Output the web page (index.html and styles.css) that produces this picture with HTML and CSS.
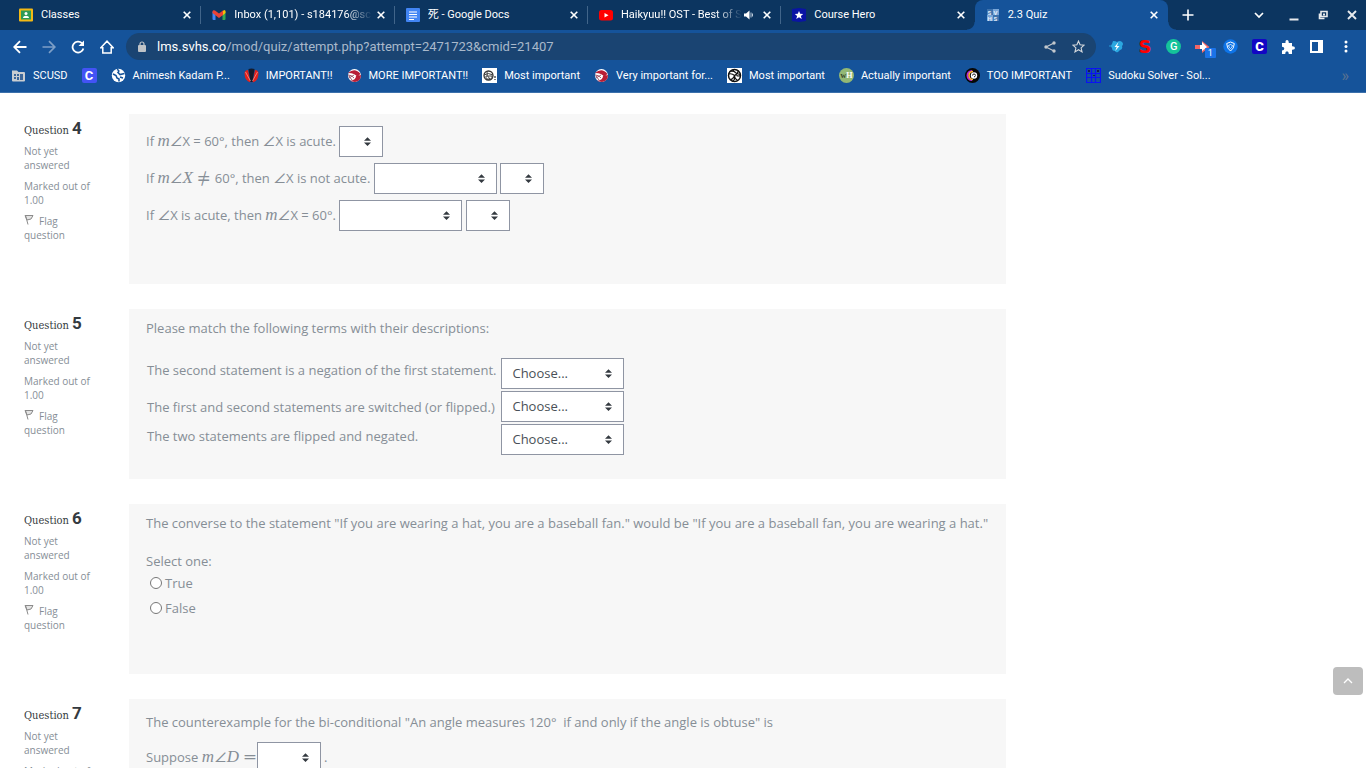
FILE: index.html
```html
<!DOCTYPE html>
<html lang="en">
<head>
    <meta charset="utf-8">
    <title>2.3 Quiz</title>
    <link rel="stylesheet" href="styles.css">
</head>
<body>
    <div class="browser">
        <!-- tabs -->
        <div class="tabStrip">
            <div class="tabs">
                <div class="tab">
                    <svg class="tabIcon" viewBox="0 0 14 14"><rect width="14" height="13" y="0.5" rx="1" fill="#f4b915"/><rect x="2" y="2.5" width="10" height="9" fill="#2d9a57"/><circle cx="7" cy="5.5" r="1.5" fill="#fff"/><path d="M4 10c0-3 6-3 6 0z" fill="#fff"/></svg>
                    <span class="tabTitle">Classes</span>
                    <button class="close" aria-label="Close tab"><svg viewBox="0 0 8 8"><path d="M0.700 0.700l6.600 6.600M7.300 0.700l-6.600 6.600"/></svg></button>
                </div>
                <div class="tab">
                    <svg class="tabIcon" viewBox="0 0 14 14"><path d="M0.500 3.500L3.500 5.500V12H1.500q-1 0-1-1z" fill="#4285f4"/><path d="M13.500 3.500L10.500 5.500V12H12.500q1 0 1-1z" fill="#34a853"/><path d="M10.500 3l2-1q1 0 1 1.500V5l-3 2.500z" fill="#fbbc04"/><path d="M0.500 5V3.500Q1 1.500 3 2.500l4 3 4-3V7L7 10 0.500 5z" fill="#ea4335"/></svg>
                    <span class="tabTitle fade">Inbox (1,101) - s184176@sc</span>
                    <button class="close" aria-label="Close tab"><svg viewBox="0 0 8 8"><path d="M0.700 0.700l6.600 6.600M7.300 0.700l-6.600 6.600"/></svg></button>
                </div>
                <div class="tab">
                    <svg class="tabIcon" viewBox="0 0 14 14"><rect width="14" height="14" rx="1" fill="#4285f4"/><path d="M3 4h8M3 6.500h8M3 9h8M3 11.500h5" stroke="#fff" stroke-width="1.200"/></svg>
                    <span class="tabTitle">死 - Google Docs</span>
                    <button class="close" aria-label="Close tab"><svg viewBox="0 0 8 8"><path d="M0.700 0.700l6.600 6.600M7.300 0.700l-6.600 6.600"/></svg></button>
                </div>
                <div class="tab">
                    <svg class="tabIcon" viewBox="0 0 14 14"><rect y="2" width="14" height="10.500" rx="2.500" fill="#f00"/><path d="M5.500 5v4.500L9.500 7.200z" fill="#fff"/></svg>
                    <span class="tabTitle fade">Haikyuu!! OST - Best of S</span>
                    <svg class="sound" viewBox="0 0 10 10"><path d="M0 3.500h2L5.500 0.500v9L2 6.500H0z" fill="#fff"/><path d="M7 2.500v5M8.500 3.500v3" stroke="#b9c9d9"/></svg>
                    <button class="close" aria-label="Close tab"><svg viewBox="0 0 8 8"><path d="M0.700 0.700l6.600 6.600M7.300 0.700l-6.600 6.600"/></svg></button>
                </div>
                <div class="tab">
                    <svg class="tabIcon" viewBox="0 0 14 14"><path d="M0 1l7-1 7 1v12l-7 1-7-1z" fill="#0a14a4"/><path d="M7 3l1.200 2.700 3 .2-2.300 2 .8 3L7 9.300l-2.700 1.600.8-3-2.300-2 3-.2z" fill="#fff"/></svg>
                    <span class="tabTitle">Course Hero</span>
                    <button class="close" aria-label="Close tab"><svg viewBox="0 0 8 8"><path d="M0.700 0.700l6.600 6.600M7.300 0.700l-6.600 6.600"/></svg></button>
                </div>
                <div class="tab active">
                    <svg class="tabIcon" viewBox="0 0 14 14"><path d="M1 1h6v6H1zM7 7h6v6H7z" fill="#3d72ad"/><path d="M7 1h6v6H7zM1 7h6v6H1z" fill="#79a6d8"/><text x="1.500" y="6.500" class="svhs">S</text><text x="7.500" y="6.500" class="svhs">V</text><text x="1.500" y="12.500" class="svhs">H</text><text x="7.500" y="12.500" class="svhs">S</text></svg>
                    <span class="tabTitle">2.3 Quiz</span>
                    <button class="close" aria-label="Close tab"><svg viewBox="0 0 8 8"><path d="M0.700 0.700l6.600 6.600M7.300 0.700l-6.600 6.600"/></svg></button>
                </div>
            </div>
            <div class="windowButtons">
                <button class="newTab" aria-label="New tab"><svg width="12" height="12" viewBox="0 0 12 12"><path d="M6 0.500v11M0.500 6h11" stroke="#fff" stroke-width="1.600"/></svg></button>
                <button class="search" aria-label="Search tabs"><svg width="10" height="8" viewBox="0 0 10 8"><path d="M1 2l4 4 4-4" fill="none" stroke="#fff" stroke-width="1.700"/></svg></button>
                <button class="win" aria-label="Minimize"><svg width="10" height="12" viewBox="0 0 10 12"><path d="M0.500 10.500h9" stroke="#e8eaed" stroke-width="2"/></svg></button>
                <button class="win" aria-label="Restore"><svg width="10" height="10" viewBox="0 0 10 10"><path d="M3 1.500h6v5H3zM1.500 3.500v5h5" fill="none" stroke="#e8eaed" stroke-width="1.600"/><path d="M5 3.500h2v2H5z" fill="#e8eaed"/></svg></button>
                <button class="win" aria-label="Close"><svg width="10" height="10" viewBox="0 0 10 10"><path d="M1 1l8 8M9 1l-8 8" stroke="#e8eaed" stroke-width="1.900"/></svg></button>
            </div>
        </div>

        <!-- address bar -->
        <div class="toolbar">
            <div class="nav">
                <button aria-label="Back"><svg width="14" height="14" viewBox="0 0 14 14"><path d="M13.500 7H1.500M7 1.200L1.200 7 7 12.800" fill="none" stroke="#fff" stroke-width="1.800"/></svg></button>
                <button aria-label="Forward"><svg width="14" height="14" viewBox="0 0 14 14"><path d="M0.500 7h12M7 1.200L12.800 7 7 12.800" fill="none" stroke="#7d9fc7" stroke-width="1.700"/></svg></button>
                <button aria-label="Reload"><svg width="14" height="14" viewBox="0 0 14 14"><path d="M12.400 8.500A5.500 5.500 0 1 1 11 3.200" fill="none" stroke="#fff" stroke-width="1.800"/><path d="M13 0.500v5.500H7.500z" fill="#fff"/></svg></button>
                <button aria-label="Home"><svg width="14" height="14" viewBox="0 0 14 14"><path d="M0.800 7.800L7 1.200l6.200 6.600H11.200v5.300H2.800V7.800z" fill="none" stroke="#fff" stroke-width="1.500"/></svg></button>
            </div>
            <div class="urlBar">
                <svg width="8" height="11" viewBox="0 0 8 11"><rect y="4" width="8" height="7" rx="1" fill="#bfc3c7"/><path d="M2 4.500V3a2 2 0 0 1 4 0v1.500" fill="none" stroke="#bfc3c7" stroke-width="1.200"/></svg>
                <span class="url"><span class="host">lms.svhs.co</span>/mod/quiz/attempt.php?attempt=2471723&amp;cmid=21407</span>
                <svg width="12" height="12" viewBox="0 0 12 12"><path d="M10 2L2 6l8 4" fill="none" stroke="#c3c8cd" stroke-width="1.200"/><circle cx="10" cy="2" r="1.700" fill="#c3c8cd"/><circle cx="2" cy="6" r="1.700" fill="#c3c8cd"/><circle cx="10" cy="10" r="1.700" fill="#c3c8cd"/></svg>
                <svg class="star" width="13" height="13" viewBox="0 0 14 14"><path d="M7 1.200l1.700 4 4.300.4-3.200 2.900 1 4.300L7 10.500l-3.800 2.300 1-4.300L1 5.600l4.300-.4z" fill="none" stroke="#d5d9dd" stroke-width="1.200"/></svg>
            </div>
            <div class="extensions">
                <span><svg width="15" height="15" viewBox="0 0 15 15"><path d="M4 2q3 0 4 1 3-2 5 0 2 2 0 4 1 3-2 4l-2 2q-2 1-3-1-3 0-3-3-2-2 0-4z" fill="#2ba7e0"/><circle cx="1" cy="7" r=".8" fill="#2ba7e0"/><path d="M9.500 3L5.500 8h2.200l-1.500 4 4.300-5H8z" fill="#fff"/></svg></span>
                <span class="letterS">S</span>
                <span class="letterG">G</span>
                <span class="arrow"><svg width="15" height="12" viewBox="0 0 15 12"><path d="M0 4h7V0l7.500 6L7 12V8H0z" fill="#f26666"/><path d="M5 4h2V1l5 5-5 4V8H5z" fill="#fff"/></svg><b class="badge">1</b></span>
                <span><svg width="15" height="15" viewBox="0 0 15 15"><circle cx="7.500" cy="7.500" r="7.200" fill="#0e74e8"/><path d="M7.500 3l3.800 1.500q0 5-3.800 7.500-3.800-2.500-3.800-7.500z" fill="none" stroke="#fff"/><path d="M7.500 5.500L9.500 6.500q-.3 2-2 3-1.700-1-2-3z" fill="#0e74e8" stroke="#fff" stroke-width=".8"/></svg></span>
                <span class="letterC dark">C</span>
                <span><svg width="14" height="14" viewBox="0 0 14 14"><path d="M1 3h3.500Q4.200 0 6 0t1.800 3H11v3.200q3-.2 3 1.800t-3 1.800V14H7.800q0-2.700-1.800-2.700T4.200 14H1v-3.500q2.300-.2 2.300-2T1 6.700z" fill="#fff"/></svg></span>
                <span><svg width="13" height="13" viewBox="0 0 13 13"><path d="M1 1h11v11H1z" fill="none" stroke="#fff" stroke-width="2"/><path d="M8 1h4v11H8z" fill="#fff"/></svg></span>
                <span><svg width="4" height="13" viewBox="0 0 4 13"><circle cx="2" cy="2" r="1.500" fill="#fff"/><circle cx="2" cy="6.500" r="1.500" fill="#fff"/><circle cx="2" cy="11" r="1.500" fill="#fff"/></svg></span>
            </div>
        </div>

        <!-- bookmarks -->
        <div class="bookmarks">
            <a href="#"><svg viewBox="0 0 15 15"><path d="M1 2.500h5l1.500 1.500H13q1 0 1 1v7.500q0 1-1 1H2q-1 0-1-1z" fill="#c9cdd1"/><path d="M3 6h2v2H3zM6 6h2v2H6zM3 9h2v2H3zM6 9h2v3H6zM9 6h3v6H9z" fill="#3d679a"/></svg>SCUSD</a>
            <a href="#"><span class="letterC">C</span></a>
            <a href="#"><svg viewBox="0 0 15 15"><circle cx="7.500" cy="7.500" r="6.700" fill="#fff"/><path d="M2 6l3 1.500 1 2.500 2 1v2.500M6 1.500q3 1 1 3l2 2 4.500-1M9 9l3 1" fill="none" stroke="#15539a" stroke-width="1.600"/></svg>Animesh Kadam P...</a>
            <a href="#"><svg viewBox="0 0 15 15"><path d="M0.500 5q0 8 6 9.500L4 2q-3 0-3.500 3zM14.500 5q0 8-6 9.500L11 2q3 0 3.500 3z" fill="#e3201c"/><path d="M4.500 1q3-1 6 0L8.500 14h-2z" fill="#151b2c"/><path d="M1.500 4l5 9M13.500 4l-5 9" stroke="#f7a8a0" stroke-width=".7"/></svg>IMPORTANT!!</a>
            <a href="#"><svg viewBox="0 0 15 15"><circle cx="7.500" cy="7.500" r="6.500" fill="#fff"/><path d="M1 5q7-6 12.500 1-2 1-3 3-3-4-9-4zM3 13q6-1 6-5l5-1q0 6-6 7z" fill="#b81e36"/><path d="M1 7q4 0 6 3M2 10l5-3M2 8l3 4" stroke="#a55b6e" fill="none"/></svg>MORE IMPORTANT!!</a>
            <a href="#"><svg viewBox="0 0 15 15"><path d="M0 0h15v15H0z" fill="#fff"/><circle cx="6.500" cy="7.500" r="4.500" fill="none" stroke="#333" stroke-width="1.300"/><path d="M2 7q4-3 9 0M5 3q-1 5 3 8M4 8h6v3H4z" fill="none" stroke="#444"/><path d="M13 8v2M13 11v1" stroke="#555" stroke-width="1.500"/></svg>Most important</a>
            <a href="#"><svg viewBox="0 0 15 15"><circle cx="7.500" cy="7.500" r="6.500" fill="#fff"/><path d="M1 5q7-6 12.500 1-2 1-3 3-3-4-9-4zM3 13q6-1 6-5l5-1q0 6-6 7z" fill="#b81e36"/><path d="M1 7q4 0 6 3M2 10l5-3M2 8l3 4" stroke="#a55b6e" fill="none"/></svg>Very important for...</a>
            <a href="#"><svg viewBox="0 0 15 15"><path d="M0 0h15v15H0z" fill="#fff"/><circle cx="7.500" cy="7.500" r="6" fill="none" stroke="#111" stroke-width="1.500"/><path d="M7.500 7.500Q5 5 1.500 6M7.500 7.500q3-1 4-5M7.500 7.500q0 3 3 5M6 1.500q0 3 7 5M2.500 3.500q4-1 6 1M3 11.500q3 0 4-3M5 13.500q4-2 2-5M9.500 7.500q2 1 4 0" fill="none" stroke="#111" stroke-width="1.100"/></svg>Most important</a>
            <a href="#"><span class="wikihow"><i>w</i>H</span>Actually important</a>
            <a href="#"><svg viewBox="0 0 15 15"><circle cx="7.500" cy="7.500" r="7.500" fill="#070707"/><path d="M7 3a4.500 4.500 0 0 0 0 9" fill="none" stroke="#b52bd4" stroke-width="2"/><path d="M8 3.500a4 4 0 0 0 0 8" fill="none" stroke="#ffb52e" stroke-width="1.600"/><circle cx="9" cy="7.500" r="3.200" fill="#fff"/><path d="M7.500 7.500a1.500 1.500 0 0 1 3 0M9 9l1.500-1" fill="none" stroke="#222"/></svg>TOO IMPORTANT</a>
            <a href="#"><svg viewBox="0 0 15 15"><path d="M0.500 0.500h14v14H0.500zM5.500 0v15M9.500 0v15M0 5.500h15M0 9.500h15" fill="none" stroke="#0b12f2" stroke-width="1.200"/><path d="M2 2h2v2H2zM11 2h2v2h-2zM7 7h2v1H7z" fill="#111a55"/></svg>Sudoku Solver - Sol...</a>
            <button class="more" aria-label="More bookmarks">»</button>
        </div>

        <!-- quiz -->
        <div class="page">
            <div class="question">
                <div class="info">
                    <h3>Question <span class="qno">4</span></h3>
                    <p>Not yet<br>answered</p>
                    <p>Marked out of<br>1.00</p>
                    <p><a href="#"><svg class="flag" viewBox="0 0 10 11"><path d="M1.500 1.500L4 10.500M1 1.500h8L7 5 3 6z" fill="#e4e4e4" stroke="#8b8b8b"/></svg>Flag<br>question</a></p>
                </div>
                <div class="content">
                    <div class="blank">If <span class="math"><i>m</i><b>∠</b></span>X = 60°, then <span class="math"><b>∠</b></span>X is acute. <select class="short" aria-label="Truth value"><option></option><option>T</option><option>F</option></select></div>
                    <div class="blank">If <span class="math"><i>m</i><b>∠</b><i>X</i> <b class="sign">≠</b> </span>60°, then <span class="math"><b>∠</b></span>X is not acute. <select aria-label="Statement type"><option></option><option>Converse</option><option>Inverse</option></select> <select class="short" aria-label="Truth value"><option></option><option>T</option><option>F</option></select></div>
                    <div class="blank">If <span class="math"><b>∠</b></span>X is acute, then <span class="math"><i>m</i><b>∠</b></span>X = 60°. <select aria-label="Statement type"><option></option><option>Converse</option><option>Inverse</option></select> <select class="short" aria-label="Truth value"><option></option><option>T</option><option>F</option></select></div>
                </div>
            </div>

            <div class="question">
                <div class="info">
                    <h3>Question <span class="qno">5</span></h3>
                    <p>Not yet<br>answered</p>
                    <p>Marked out of<br>1.00</p>
                    <p><a href="#"><svg class="flag" viewBox="0 0 10 11"><path d="M1.500 1.500L4 10.500M1 1.500h8L7 5 3 6z" fill="#e4e4e4" stroke="#8b8b8b"/></svg>Flag<br>question</a></p>
                </div>
                <div class="content">
                    <p>Please match the following terms with their descriptions:</p>
                    <table class="match">
                        <tr>
                            <td class="top"><label for="match1">The second statement is a negation of the first statement.</label></td>
                            <td><select id="match1"><option>Choose...</option></select></td>
                        </tr>
                        <tr>
                            <td><label for="match2">The first and second statements are switched (or flipped.)</label></td>
                            <td><select id="match2"><option>Choose...</option></select></td>
                        </tr>
                        <tr>
                            <td class="top"><label for="match3">The two statements are flipped and negated.</label></td>
                            <td><select id="match3"><option>Choose...</option></select></td>
                        </tr>
                    </table>
                </div>
            </div>

            <div class="question">
                <div class="info">
                    <h3>Question <span class="qno">6</span></h3>
                    <p>Not yet<br>answered</p>
                    <p>Marked out of<br>1.00</p>
                    <p><a href="#"><svg class="flag" viewBox="0 0 10 11"><path d="M1.500 1.500L4 10.500M1 1.500h8L7 5 3 6z" fill="#e4e4e4" stroke="#8b8b8b"/></svg>Flag<br>question</a></p>
                </div>
                <div class="content">
                    <p>The converse to the statement "If you are wearing a hat, you are a baseball fan." would be "If you are a baseball fan, you are wearing a hat."</p>
                    <div class="select">Select one:</div>
                    <div class="answer"><input type="radio" name="q6" id="true"><label for="true">True</label></div>
                    <div class="answer"><input type="radio" name="q6" id="false"><label for="false">False</label></div>
                </div>
            </div>

            <div class="question">
                <div class="info">
                    <h3>Question <span class="qno">7</span></h3>
                    <p>Not yet<br>answered</p>
                    <p>Marked out of<br>1.00</p>
                </div>
                <div class="content counter">
                    <p>The counterexample for the bi-conditional "An angle measures 120°&nbsp; if and only if the angle is obtuse" is</p>
                    <div class="blank">Suppose <span class="math"><i>m</i><b>∠</b><i>D</i> <b class="sign">=</b></span><select class="medium" aria-label="Angle measure"><option></option></select> .</div>
                </div>
            </div>
            <button class="toTop" aria-label="Back to top"><svg width="10" height="6" viewBox="0 0 10 6"><path d="M1 5l4-4 4 4" fill="none" stroke="#fff" stroke-width="1.300"/></svg></button>
        </div>
    </div>
</body>
</html>
```

FILE: styles.css
```css
* {
    box-sizing: border-box;
}

body {
    margin: 0;
    font-family: "Open Sans", sans-serif;
    font-size: 13px;
    line-height: 20px;
    color: #868e96;
    background-color: #fff;
}

button {
    padding: 0;
    border: 0;
    background: none;
    color: #fff;
    display: flex;
    align-items: center;
    justify-content: center;
}

a {
    color: inherit;
    text-decoration: none;
}

.browser {
    height: 100vh;
    display: flex;
    flex-direction: column;
    overflow: hidden;
}

/* tabs */
.tabStrip {
    display: flex;
    flex: none;
    height: 30px;
    background-color: #0c3560;
    color: #fff;
    font: 11px/28px Roboto, "Noto Sans CJK JP", sans-serif;
}

.tabs {
    display: flex;
    flex: 1;
    min-width: 0;
    padding-left: 8px;
}

.tab {
    position: relative;
    display: flex;
    align-items: center;
    flex: 1;
    min-width: 0;
    height: 30px;
    padding: 0 10px 0 11px;
}

.tab:not(.active)::after {
    content: "";
    position: absolute;
    right: 0;
    top: 6px;
    height: 18px;
    border-right: 1px solid #41658a;
}

.tab:nth-last-child(2)::after {
    display: none;
}

.tab.active {
    background-color: #15539a;
    border-radius: 8px 8px 0 0;
}

.tab.active::before, .tab.active::after {
    content: "";
    position: absolute;
    bottom: 0;
    width: 8px;
    height: 8px;
}

.tab.active::before {
    left: -8px;
    background: radial-gradient(circle at 0 0, transparent 7px, #15539a 8px);
}

.tab.active::after {
    right: -8px;
    background: radial-gradient(circle at 100% 0, transparent 7px, #15539a 8px);
}

.tabIcon {
    width: 14px;
    height: 14px;
    flex: none;
    margin-right: 8px;
}

.svhs {
    font: bold 6px Roboto, sans-serif;
    fill: #e4eefa;
}

.tabTitle {
    flex: 1;
    min-width: 0;
    overflow: hidden;
    white-space: nowrap;
}

.fade {
    -webkit-mask-image: linear-gradient(to left, transparent, #000 26px);
    mask-image: linear-gradient(to left, transparent, #000 26px);
}

.sound {
    width: 10px;
    height: 10px;
    margin: 0 4px 0 2px;
}

.close {
    width: 18px;
    height: 18px;
    margin-left: 0;
    margin-right: -5px;
}

.close svg {
    width: 8px;
    height: 8px;
    stroke: #fff;
    stroke-width: 1.6;
}

.windowButtons {
    display: flex;
    width: 198px;
}

.newTab {
    width: 40px;
    margin-right: auto;
}

.search {
    width: 40px;
}

.win {
    width: 29px;
}

/* address bar */
.toolbar {
    display: flex;
    flex: none;
    align-items: center;
    height: 32px;
    padding: 1px 6px 0 6px;
    background-color: #15539a;
}

.nav {
    display: flex;
    gap: 2px;
    margin-right: 6px;
}

.nav button {
    width: 27px;
    height: 27px;
}

.urlBar {
    display: flex;
    flex: 1;
    align-items: center;
    height: 27px;
    padding: 0 11px 0 12px;
    border-radius: 14px;
    background-color: #1a4472;
    font: 13px/26px Roboto, sans-serif;
    color: #a9b9cb;
}

.url {
    flex: 1;
    margin-left: 11px;
}

.host {
    color: #fff;
}

.star {
    margin-left: 16px;
}

.extensions {
    display: flex;
    width: 258px;
    margin-left: 6px;
    align-items: center;
    justify-content: space-around;
}

.extensions span {
    display: flex;
    position: relative;
    width: 15px;
    height: 15px;
    align-items: center;
    justify-content: center;
    font: 900 13px/15px Roboto, sans-serif;
}

.extensions .letterS {
    font: bold 18px/15px "DejaVu Sans", sans-serif;
    color: #f00;
}

.extensions .letterG {
    border-radius: 50%;
    background-color: #15c39a;
    font-size: 11px;
    font-weight: 500;
    color: #fff;
}

.badge {
    position: absolute;
    left: 10px;
    top: 9px;
    width: 11px;
    border-radius: 1px;
    background-color: #1a73e8;
    color: #fff;
    font: 9px/10px Roboto, sans-serif;
    text-align: center;
}

.letterC {
    width: 15px;
    height: 15px;
    border-radius: 2px;
    background-color: #4353f5;
    color: #fff;
    font: bold 13px/15px Roboto, sans-serif;
    text-align: center;
}

.letterC.dark {
    background-color: #1206c4;
}

/* bookmarks */
.bookmarks {
    display: flex;
    flex: none;
    align-items: center;
    gap: 14px;
    height: 31px;
    padding: 0 17px 4px 11px;
    background-color: #15539a;
    border-bottom: 1px solid #3b70ab;
    color: #fff;
    font: 11px/15px Roboto, sans-serif;
    white-space: nowrap;
}

.bookmarks a {
    display: flex;
    align-items: center;
    gap: 7px;
}

.bookmarks a svg {
    width: 15px;
    height: 15px;
}

.wikihow {
    width: 15px;
    height: 15px;
    border-radius: 50%;
    background-color: #93b874;
    font: bold 8px/15px "Liberation Serif", serif;
    text-align: center;
}

.wikihow i {
    font-style: normal;
    color: #35452a;
}

.more {
    margin-left: auto;
    color: #5d7391;
    font: 16px/15px Roboto, sans-serif;
}

/* quiz */
.page {
    position: relative;
    flex: 1;
    min-height: 0;
    overflow: hidden;
    padding: 21px 360px 0 24px;
}

.question {
    display: flex;
    margin-bottom: 25px;
}

.info {
    width: 105px;
    flex: none;
    padding-top: 4px;
    font-size: 10px;
    line-height: 14px;
}

.info h3 {
    margin: 0 0 6px;
    height: 20px;
    font: 11px/20px "Roboto Slab", "DejaVu Serif Condensed", "DejaVu Serif", serif;
    color: #343a40;
}

.qno {
    font: bold 17px/20px Roboto, sans-serif;
}

.info p {
    margin: 0 0 7px;
}

.flag {
    width: 10px;
    height: 11px;
    margin-right: 5px;
}

.content {
    flex: 1;
    min-width: 0;
    min-height: 170px;
    padding: 9px 17px;
    background-color: #f7f7f7;
}

.content p {
    margin: 0;
}

.blank {
    display: flow-root;
    margin: 2px 0 3px;
    line-height: 32px;
}

.math {
    font-family: "Liberation Serif", serif;
    font-size: 17px;
    line-height: 20px;
}

.math b {
    font: 14px/20px "DejaVu Math TeX Gyre", "DejaVu Sans", sans-serif;
}

.math .sign {
    font-size: 17px;
}

select {
    -webkit-appearance: none;
    appearance: none;
    width: 123px;
    height: 31px;
    padding: 0 24px 2px 10px;
    border: 1px solid #8f95a3;
    border-radius: 0;
    background: #fff url("data:image/svg+xml,%3Csvg xmlns='http://www.w3.org/2000/svg' viewBox='0 0 4 5'%3E%3Cpath fill='%23343a40' d='M2 0L0 2h4zm0 5L0 3h4z'/%3E%3C/svg%3E") no-repeat right 11px center;
    background-size: 7px 9px;
    color: #495057;
    font: 13px "Open Sans", sans-serif;
    vertical-align: middle;
}

.blank select {
    margin-bottom: 2px;
}

.short {
    width: 44px;
}

.medium {
    width: 64px;
}

.match {
    margin-top: 18px;
    border-spacing: 0 2px;
}

.match td {
    height: 31px;
    padding: 0 5px 0 1px;
    line-height: 20px;
}

.match td:last-child {
    padding: 0;
}

.match select {
    display: block;
}

.match td.top {
    vertical-align: top;
    padding-top: 2px;
}

.select {
    margin-top: 18px;
}

.answer {
    display: flex;
    align-items: center;
    margin: 2px 0 5px;
}

.answer input {
    width: 12px;
    height: 12px;
    margin: 0 3px 0 4px;
}

.counter {
    padding-top: 13px;
}

.counter p {
    margin-bottom: 9px;
}

.toTop {
    position: absolute;
    right: 3px;
    bottom: 73px;
    width: 30px;
    height: 28px;
    border-radius: 4px;
    background-color: #bdbdbd;
}
```
